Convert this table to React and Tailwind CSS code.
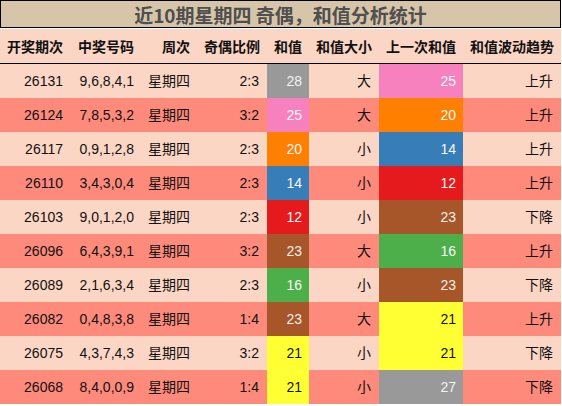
const COLORS = {
  gray: 'bg-[#999999] text-[#f2f2f2]',
  pink: 'bg-[#f781bf] text-[#f7f7f7]',
  orange: 'bg-[#ff7f00] text-[#f7f7f7]',
  blue: 'bg-[#377eb8] text-[#f7f7f7]',
  red: 'bg-[#e41a1c] text-[#f7f7f7]',
  brown: 'bg-[#a65628] text-[#eeeeee]',
  green: 'bg-[#4daf4a] text-[#f7f7f7]',
  yellow: 'bg-[#ffff33] text-[#111111]',
};

const rows = [
  ['26131', '9,6,8,4,1', '2:3', 28, 'gray', '大', 25, 'pink', '上升'],
  ['26124', '7,8,5,3,2', '3:2', 25, 'pink', '大', 20, 'orange', '上升'],
  ['26117', '0,9,1,2,8', '2:3', 20, 'orange', '小', 14, 'blue', '上升'],
  ['26110', '3,4,3,0,4', '2:3', 14, 'blue', '小', 12, 'red', '上升'],
  ['26103', '9,0,1,2,0', '2:3', 12, 'red', '小', 23, 'brown', '下降'],
  ['26096', '6,4,3,9,1', '3:2', 23, 'brown', '大', 16, 'green', '上升'],
  ['26089', '2,1,6,3,4', '2:3', 16, 'green', '小', 23, 'brown', '下降'],
  ['26082', '0,4,8,3,8', '1:4', 23, 'brown', '大', 21, 'yellow', '上升'],
  ['26075', '4,3,7,4,3', '3:2', 21, 'yellow', '小', 21, 'yellow', '下降'],
  ['26068', '8,4,0,0,9', '1:4', 21, 'yellow', '小', 27, 'gray', '下降'],
];

const headers = ['开奖期次', '中奖号码', '周次', '奇偶比例', '和值', '和值大小', '上一次和值', '和值波动趋势'];
const cols = 'grid grid-cols-[70px_71px_56px_70px_42px_70px_84px_98px]';

export default function App() {
  return (
    <div className="w-[561px] bg-white text-[14px] text-[#111]" style={{ fontFamily: '"Liberation Sans", "Noto Sans CJK SC", sans-serif' }}>
      <div className="h-[28px] border border-black bg-[#d6c5a9] flex items-center justify-center">
        <span className="text-[19px] font-bold text-[#4f4f4f] leading-none" style={{ fontFamily: '"Noto Sans CJK SC", sans-serif' }}>
          近10期星期四 奇偶，和值分析统计
        </span>
      </div>
      <div className={`${cols} mt-px h-[35px] bg-[#fcd6c4] border-b border-black items-center`} style={{ fontFamily: '"Noto Sans CJK SC", sans-serif' }}>
        {headers.map(h => (
          <div key={h} className="text-right pr-[7px] font-bold text-[14px] text-[#111]">{h}</div>
        ))}
      </div>
      {rows.map((r, i) => {
        const bg = i % 2 === 0 ? 'bg-[#fcd6c4]' : 'bg-[#fe8a7b]';
        return (
          <div key={r[0]} className={`${cols} h-[34px] ${bg}`}>
            <div className="flex items-center justify-end pr-[7px]">{r[0]}</div>
            <div className="flex items-center justify-end pr-[7px]">{r[1]}</div>
            <div className="flex items-center justify-end pr-[7px]">星期四</div>
            <div className="flex items-center justify-end pr-[8px]">{r[2]}</div>
            <div className={`flex items-center justify-end pr-[7px] ${COLORS[r[4]]}`}>{r[3]}</div>
            <div className="flex items-center justify-end pr-[8px]">{r[5]}</div>
            <div className={`flex items-center justify-end pr-[7px] ${COLORS[r[7]]}`}>{r[6]}</div>
            <div className="flex items-center justify-end pr-[8px]">{r[8]}</div>
          </div>
        );
      })}
    </div>
  );
}
